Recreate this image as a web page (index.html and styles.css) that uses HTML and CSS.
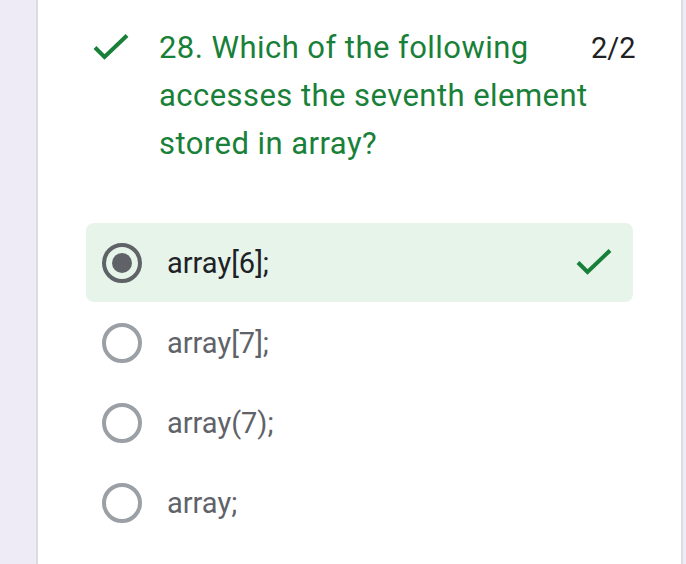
FILE: index.html
```html
<!DOCTYPE html>
<html>
<head>
<meta charset="utf-8">
<link rel="stylesheet" href="styles.css">
</head>
<body>
<div class="page">
  <div class="card">
    <div class="header">
      <div class="mark">
        <svg width="36" height="28" viewBox="0 0 36 28"><path d="M2 13.5 L11.5 23 L34 1.5" fill="none" stroke="#188038" stroke-width="4"/></svg>
      </div>
      <div class="question">28. Which of the following accesses the seventh element stored in array?</div>
      <div class="score">2/2</div>
    </div>
    <div class="options">
      <div class="option correct">
        <span class="radio checked"></span>
        <span class="label">array[6];</span>
        <svg class="ok" width="36" height="28" viewBox="0 0 36 28"><path d="M2 13.5 L11.5 23 L34 1.5" fill="none" stroke="#188038" stroke-width="4"/></svg>
      </div>
      <div class="option">
        <span class="radio"></span>
        <span class="label">array[7];</span>
      </div>
      <div class="option">
        <span class="radio"></span>
        <span class="label">array(7);</span>
      </div>
      <div class="option">
        <span class="radio"></span>
        <span class="label">array;</span>
      </div>
    </div>
  </div>
</div>
</body>
</html>
```
FILE: styles.css
```css
html, body {
  margin: 0;
  padding: 0;
  background: #eeebf7;
  font-family: Roboto, "Liberation Sans", sans-serif;
}
.page {
  padding-left: 36px;
  width: 647px;
  height: 564px;
}
.card {
  background: #ffffff;
  border-left: 2px solid #dadce0;
  border-right: 2px solid #dadce0;
  height: 564px;
  box-sizing: border-box;
  padding: 24px 48px 0 48px;
}
.header {
  display: flex;
  align-items: flex-start;
}
.mark {
  padding-left: 7px;
  padding-top: 10px;
  flex: none;
  box-sizing: border-box;
  width: 73px;
}
.mark svg { display: block; }
.question {
  color: #188038;
  font-size: 31px;
  letter-spacing: 0.45px;
  line-height: 48px;
  width: 432px;
  flex: none;
}
.score {
  font-size: 29px;
  line-height: 48px;
  color: #202124;
  white-space: nowrap;
}
.options {
  margin-top: 55px;
}
.option {
  display: flex;
  align-items: center;
  height: 80px;
  padding: 0 21px 0 16px;
  border-radius: 8px;
}
.option.correct {
  background: #e6f4ea;
  height: 79px;
  margin-bottom: 1px;
}
.radio {
  width: 40px;
  height: 40px;
  box-sizing: border-box;
  border: 4px solid #9aa0a6;
  border-radius: 50%;
  flex: none;
  position: relative;
}
.radio.checked {
  border-color: #5f6368;
}
.radio.checked::after {
  content: "";
  position: absolute;
  left: 6px;
  top: 6px;
  width: 20px;
  height: 20px;
  border-radius: 50%;
  background: #5f6368;
}
.label {
  margin-left: 25px;
  font-size: 29px;
  color: #5f6368;
  flex: 1;
}
.correct .label { color: #202124; }
.ok { flex: none; }
```
